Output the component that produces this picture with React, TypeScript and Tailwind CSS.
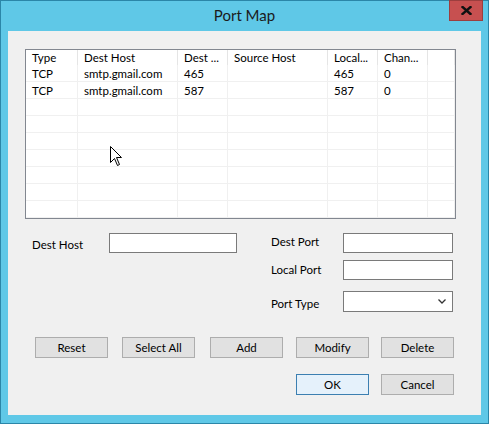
import React from "react";

const font = { fontFamily: 'Lato, "Noto Sans", sans-serif' };

const columns = [
  { label: "Type", w: "w-[52px]" },
  { label: "Dest Host", w: "w-[100px]" },
  { label: "Dest ...", w: "w-[50px]" },
  { label: "Source Host", w: "w-[100px]" },
  { label: "Local...", w: "w-[50px]" },
  { label: "Chan...", w: "w-[50px]" },
  { label: "", w: "flex-1" },
];

const empty = ["", "", "", "", "", "", ""];
const rows = [
  ["TCP", "smtp.gmail.com", "465", "", "465", "0", ""],
  ["TCP", "smtp.gmail.com", "587", "", "587", "0", ""],
  empty, empty, empty, empty, empty, empty, empty,
];

function Btn({ children, primary }: { children: React.ReactNode; primary?: boolean }) {
  return (
    <button
      className={
        "flex h-[21px] w-[73px] items-center justify-center border text-[11.5px] text-[#000] " +
        (primary ? "border-[#3c7fb1] bg-[#e5f1fb]" : "border-[#adadad] bg-[#e1e1e1]")
      }
    >
      {children}
    </button>
  );
}

function Cursor() {
  return (
    <svg className="absolute left-[109px] top-[145px]" width="13" height="21" viewBox="0 0 13 21">
      <path
        d="M0.5 0.5 L0.5 16.5 L4.5 12.5 L7.5 19.5 L9.5 18.5 L6.5 11.5 L11.5 11.5 Z"
        fill="#fff"
        stroke="#000"
        strokeWidth="1"
      />
    </svg>
  );
}

export default function App() {
  return (
    <div
      className="relative h-[424px] w-[489px] border border-[#2b86a8] bg-[#5fc8e7] text-[11.5px] text-black"
      style={font}
    >
      {/* title bar */}
      <div className="relative flex h-[30px] items-center justify-center">
        <span className="pb-[1px] text-[15px] text-[#1b1b1b]">Port Map</span>
        <button className="absolute right-[5px] top-[-1px] flex h-[21px] w-[34px] items-center justify-center border border-[#9c3e3e] bg-[#c75050]">
          <svg width="11" height="9" viewBox="0 0 11 9">
            <path d="M1.5 1 L9.5 8 M9.5 1 L1.5 8" stroke="#111" strokeWidth="2.4" strokeLinecap="square" />
          </svg>
        </button>
      </div>

      {/* client area */}
      <div className="mx-[7px] h-[384px] bg-[#f0f0f0] pt-[18px]">
        {/* list view */}
        <div className="ml-[17px] flex h-[170px] w-[431px] flex-col overflow-hidden border border-[#828790] bg-white">
          <div className="flex h-[15px] shrink-0">
            {columns.map((c, i) => (
              <div
                key={i}
                className={c.w + " flex items-center overflow-hidden whitespace-nowrap border-r border-[#e5e5e5] pl-[6px] leading-none"}
              >
                {c.label}
              </div>
            ))}
          </div>
          {rows.map((r, ri) => (
            <div key={ri} className="flex h-[17px] shrink-0 border-b border-[#f0f0f0]">
              {r.map((cell, ci) => (
                <div
                  key={ci}
                  className={columns[ci].w + " flex items-center overflow-hidden whitespace-nowrap border-r border-[#f0f0f0] pl-[6px] pt-[1px] leading-none"}
                >
                  {cell}
                </div>
              ))}
            </div>
          ))}
        </div>

        {/* form */}
        <div className="mt-[14px] flex h-[80px]">
          <div className="ml-[24px] flex h-[20px] w-[205px] items-center">
            <span className="mt-[3px] w-[77px]">Dest Host</span>
            <div className="h-[20px] w-[129px] border border-[#7a7a7a] bg-white" />
          </div>
          <div className="ml-[34px] flex flex-col">
            <div className="flex h-[20px] items-center">
              <span className="mt-[-3px] w-[72px]">Dest Port</span>
              <div className="h-[20px] w-[110px] border border-[#7a7a7a] bg-white" />
            </div>
            <div className="mt-[7px] flex h-[20px] items-center">
              <span className="w-[72px]">Local Port</span>
              <div className="h-[20px] w-[110px] border border-[#7a7a7a] bg-white" />
            </div>
            <div className="mt-[11px] flex h-[21px] items-center">
              <span className="mt-[4px] w-[72px]">Port Type</span>
              <div className="flex h-[21px] w-[110px] items-center justify-end border border-[#7a7a7a] bg-white pr-[6px]">
                <svg width="8" height="5" viewBox="0 0 8 5">
                  <path d="M0.5 0.5 L4 4 L7.5 0.5" fill="none" stroke="#333" strokeWidth="1.3" />
                </svg>
              </div>
            </div>
          </div>
        </div>

        {/* buttons */}
        <div className="ml-[27px] mt-[24px] flex">
          <Btn>Reset</Btn>
          <div className="w-[14px]" />
          <Btn>Select All</Btn>
          <div className="w-[15px]" />
          <Btn>Add</Btn>
          <div className="w-[13px]" />
          <Btn>Modify</Btn>
          <div className="w-[12px]" />
          <Btn>Delete</Btn>
        </div>
        <div className="ml-[288px] mt-[16px] flex gap-[12px]">
          <Btn primary>OK</Btn>
          <Btn>Cancel</Btn>
        </div>
      </div>

      <Cursor />
    </div>
  );
}
